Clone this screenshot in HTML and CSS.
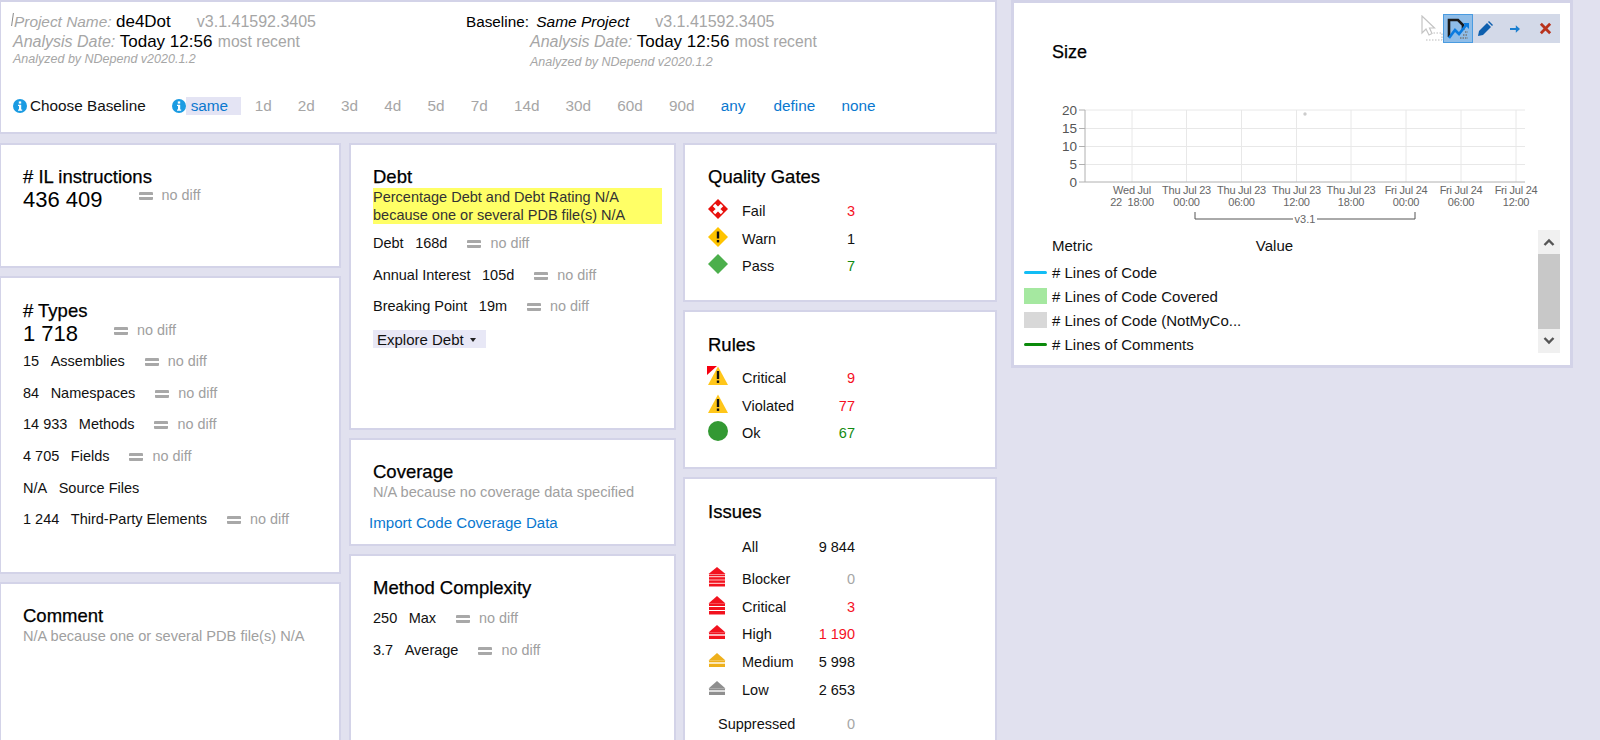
FILE: index.html
```html
<!DOCTYPE html>
<html>
  <head lang="en">
    <meta charset="UTF-8" />
    <title>de4Dot dashboard</title>
    <link rel="stylesheet" href="styles.css">
  </head>

  <body>
    <svg class="icon-defs" width="0" height="0">
      <symbol id="i-fail" viewBox="0 0 20 20">
        <path d="M10 0 20 10 10 20 0 10z" fill="#e8100c"/>
        <path d="M6 6 14 14M14 6 6 14" stroke="#fff" stroke-width="3.4"/>
      </symbol>
      <symbol id="i-warn" viewBox="0 0 20 20">
        <path d="M10 0 20 10 10 20 0 10z" fill="#ffc400"/>
        <path d="M10 4.500V11.500" stroke="#111" stroke-width="2.400"/>
        <rect x="8.800" y="13" width="2.400" height="2.400" fill="#111"/>
      </symbol>
      <symbol id="i-pass" viewBox="0 0 20 20">
        <path d="M10 0 20 10 10 20 0 10z" fill="#4caf4c"/>
      </symbol>
      <symbol id="i-tri" viewBox="0 0 20 20">
        <path d="M10 0.500 20 19H0z" fill="#ffc61a"/>
        <path d="M10 5V13" stroke="#111" stroke-width="2.400"/>
        <rect x="8.800" y="14.500" width="2.400" height="2.400" fill="#111"/>
      </symbol>
      <symbol id="i-info" viewBox="0 0 14 14">
        <circle cx="7" cy="7" r="7" fill="#1a9be2"/>
        <rect x="5.800" y="2.400" width="2.400" height="2.200" fill="#fff"/>
        <path d="M5 5.700H8.200V10.500H9.200V11.700H5V10.500H6V6.900H5z" fill="#fff"/>
      </symbol>
      <symbol id="i-sev1" viewBox="0 0 18 20">
        <path d="M9 0 17.500 7H.5z" fill="currentColor"/>
        <path d="M1 7.500H17V19.500H1z" fill="currentColor"/>
        <path d="M1 9.700H17M1 13H17M1 16.300H17" stroke="#fbb" stroke-width="1.200"/>
      </symbol>
      <symbol id="i-sev2" viewBox="0 0 18 20">
        <path d="M9 1 17.500 8.500H.5z" fill="currentColor"/>
        <path d="M1 8.500H17V19.500H1z" fill="currentColor"/>
        <path d="M1 11.500H17M1 15.500H17" stroke="#fff" stroke-width="1.200"/>
      </symbol>
      <symbol id="i-sev3" viewBox="0 0 18 14">
        <path d="M9 0 17.500 7.500H.5z" fill="currentColor"/>
        <path d="M1 7.500H17V14H1z" fill="currentColor"/>
        <path d="M1 10H17" stroke="#fff" stroke-width="1.400"/>
      </symbol>
    </svg>

    <div class="page">
      <div class="main">
        <div class="panel top">
          <div class="top-info">
            <div class="top-col">
              <div class="line-one"><span class="caret"></span><i class="gray name-label">Project Name:</i> <span class="big name-val">de4Dot</span><span class="gray version">v3.1.41592.3405</span></div>
              <div class="line-two"><i class="gray">Analysis Date:</i> <span class="big">Today 12:56</span> <span class="gray recent">most recent</span></div>
              <div class="line-three"><i>Analyzed by NDepend v2020.1.2</i></div>
            </div>
            <div class="top-col top-col-right">
              <div class="line-one baseline">Baseline: <i class="same-project">Same Project</i><span class="gray version">v3.1.41592.3405</span></div>
              <div class="line-two indent"><i class="gray">Analysis Date:</i> <span class="big">Today 12:56</span> <span class="gray recent">most recent</span></div>
              <div class="line-three indent line-three-right"><i>Analyzed by NDepend v2020.1.2</i></div>
            </div>
          </div>
          <div class="choose">
            <svg class="info"><use href="#i-info"/></svg>
            <span class="choose-label">Choose Baseline</span>
            <svg class="info info-same"><use href="#i-info"/></svg>
            <a class="link same" href="#">same</a>
            <div class="days">
              <span>1d</span><span>2d</span><span>3d</span><span>4d</span><span>5d</span><span>7d</span><span>14d</span><span>30d</span><span>60d</span><span>90d</span>
              <a class="link any" href="#">any</a><a class="link" href="#">define</a><a class="link" href="#">none</a>
            </div>
          </div>
        </div>

        <div class="columns">
          <div class="col col-1">
            <div class="card card-il">
              <h2># IL instructions</h2>
              <div class="big-num">436 409<span class="diff diff-big"><b class="eq"></b>no diff</span></div>
            </div>
            <div class="card card-types">
              <h2># Types</h2>
              <div class="big-num">1 718<span class="diff diff-big"><b class="eq"></b>no diff</span></div>
              <div class="row first"><span class="val">15</span>Assemblies<span class="diff"><b class="eq"></b>no diff</span></div>
              <div class="row"><span class="val">84</span>Namespaces<span class="diff"><b class="eq"></b>no diff</span></div>
              <div class="row"><span class="val">14 933</span>Methods<span class="diff"><b class="eq"></b>no diff</span></div>
              <div class="row"><span class="val">4 705</span>Fields<span class="diff"><b class="eq"></b>no diff</span></div>
              <div class="row"><span class="val">N/A</span>Source Files</div>
              <div class="row"><span class="val">1 244</span>Third-Party Elements<span class="diff"><b class="eq"></b>no diff</span></div>
            </div>
            <div class="card card-comment">
              <h2>Comment</h2>
              <div class="muted">N/A because one or several PDB file(s) N/A</div>
            </div>
          </div>

          <div class="col col-2">
            <div class="card card-debt">
              <h2>Debt</h2>
              <div class="warn-box">Percentage Debt and Debt Rating N/A<br>because one or several PDB file(s) N/A</div>
              <div class="row row-plain"><span class="val">Debt</span>168d<span class="diff"><b class="eq"></b>no diff</span></div>
              <div class="row"><span class="val">Annual Interest</span>105d<span class="diff"><b class="eq"></b>no diff</span></div>
              <div class="row"><span class="val">Breaking Point</span>19m<span class="diff"><b class="eq"></b>no diff</span></div>
              <div class="explore">Explore Debt<span class="arrow"></span></div>
            </div>
            <div class="card card-coverage">
              <h2>Coverage</h2>
              <div class="muted">N/A because no coverage data specified</div>
              <a class="link import" href="#">Import Code Coverage Data</a>
            </div>
            <div class="card card-complexity">
              <h2>Method Complexity</h2>
              <div class="row first"><span class="val">250</span>Max<span class="diff"><b class="eq"></b>no diff</span></div>
              <div class="row"><span class="val">3.7</span>Average<span class="diff"><b class="eq"></b>no diff</span></div>
            </div>
          </div>

          <div class="col col-3">
            <div class="card card-gates">
              <h2>Quality Gates</h2>
              <div class="stat first"><svg class="stat-icon"><use href="#i-fail"/></svg><span class="stat-name">Fail</span><span class="stat-val red">3</span></div>
              <div class="stat"><svg class="stat-icon"><use href="#i-warn"/></svg><span class="stat-name">Warn</span><span class="stat-val">1</span></div>
              <div class="stat"><svg class="stat-icon"><use href="#i-pass"/></svg><span class="stat-name">Pass</span><span class="stat-val green">7</span></div>
            </div>
            <div class="card card-rules">
              <h2>Rules</h2>
              <div class="stat first"><span class="corner"></span><svg class="stat-icon"><use href="#i-tri"/></svg><span class="stat-name">Critical</span><span class="stat-val red">9</span></div>
              <div class="stat"><svg class="stat-icon"><use href="#i-tri"/></svg><span class="stat-name">Violated</span><span class="stat-val red">77</span></div>
              <div class="stat"><span class="ok-dot"></span><span class="stat-name">Ok</span><span class="stat-val green">67</span></div>
            </div>
            <div class="card card-issues">
              <h2>Issues</h2>
              <div class="stat first"><span class="stat-blank"></span><span class="stat-name">All</span><span class="stat-val">9 844</span></div>
              <div class="stat sev-first"><svg class="sev sev-red"><use href="#i-sev1"/></svg><span class="stat-name">Blocker</span><span class="stat-val gray">0</span></div>
              <div class="stat"><svg class="sev sev-red"><use href="#i-sev2"/></svg><span class="stat-name">Critical</span><span class="stat-val red">3</span></div>
              <div class="stat"><svg class="sev sev-small sev-red"><use href="#i-sev3"/></svg><span class="stat-name">High</span><span class="stat-val red">1 190</span></div>
              <div class="stat"><svg class="sev sev-small sev-amber"><use href="#i-sev3"/></svg><span class="stat-name">Medium</span><span class="stat-val">5 998</span></div>
              <div class="stat"><svg class="sev sev-small sev-gray"><use href="#i-sev3"/></svg><span class="stat-name">Low</span><span class="stat-val">2 653</span></div>
              <div class="stat suppressed"><span class="stat-name">Suppressed</span><span class="stat-val gray">0</span></div>
            </div>
          </div>
        </div>
      </div>

      <div class="panel side">
        <div class="toolbar">
          <svg class="drag-cursor" width="22" height="26" viewBox="0 0 22 26">
            <path d="M1 1V18L5 14 8 20 11 18.500 8.500 13H13.500z" fill="#fff" stroke="#c4c4c4" stroke-width="1.200"/>
            <path d="M5 25H21V18H12" fill="none" stroke="#bbb" stroke-dasharray="1.500 1.500"/>
          </svg>
          <span class="tool tool-on">
            <svg width="24" height="24" viewBox="0 0 24 24">
              <path d="M3 20V3H12L17 8V13" fill="none" stroke="#1a1a1a" stroke-width="2.600"/>
              <path d="M14 21H22M17 18H22M19 15H22" stroke="#777" stroke-dasharray="1.500 1" stroke-width="1.500"/>
              <path d="M3 21 9 13 13 17 21 7" fill="none" stroke="#0a7be0" stroke-width="2.600"/>
              <path d="M17 6H23V12z" fill="#0a7be0"/>
            </svg>
          </span>
          <span class="tool tool-pencil">
            <svg width="16" height="16" viewBox="0 0 16 16">
              <path d="M1 15 2 10 10 2 14 6 6 14z" fill="#0e5fae"/>
              <path d="M11 1 12 0 16 4 15 5z" fill="#0e5fae"/>
            </svg>
          </span>
          <span class="tool">
            <svg width="12" height="10" viewBox="0 0 14 12">
              <path d="M1 6H11" stroke="#1b7fd0" stroke-width="2.400"/>
              <path d="M8 1.500 13 6 8 10.500z" fill="#1b7fd0"/>
            </svg>
          </span>
          <span class="tool">
            <svg width="13" height="13" viewBox="0 0 14 14">
              <path d="M2 2 12 12M12 2 2 12" stroke="#b8321c" stroke-width="3"/>
            </svg>
          </span>
        </div>

        <h2 class="size-title">Size</h2>

        <svg class="chart" width="560" height="130" viewBox="0 0 560 130">
          <g class="grid">
            <path d="M72 10H512M72 28.500H512M72 46.500H512M72 64.500H512"/>
            <path d="M119 10V82M173.500 10V82M228.500 10V82M283.500 10V82M338 10V82M393 10V82M448 10V82M503 10V82"/>
          </g>
          <path class="axis" d="M72 10V82H512M66 10H72M66 28.500H72M66 46.500H72M66 64.500H72M66 82H72"/>
          <circle cx="292" cy="14" r="1.700" fill="#ccc"/>
          <g class="y-labels">
            <text x="64" y="15">20</text>
            <text x="64" y="33">15</text>
            <text x="64" y="51">10</text>
            <text x="64" y="69">5</text>
            <text x="64" y="87">0</text>
          </g>
          <g class="x-labels">
            <text x="119" y="94">Wed Jul</text><text x="119" y="106">22  18:00</text>
            <text x="173.500" y="94">Thu Jul 23</text><text x="173.500" y="106">00:00</text>
            <text x="228.500" y="94">Thu Jul 23</text><text x="228.500" y="106">06:00</text>
            <text x="283.500" y="94">Thu Jul 23</text><text x="283.500" y="106">12:00</text>
            <text x="338" y="94">Thu Jul 23</text><text x="338" y="106">18:00</text>
            <text x="393" y="94">Fri Jul 24</text><text x="393" y="106">00:00</text>
            <text x="448" y="94">Fri Jul 24</text><text x="448" y="106">06:00</text>
            <text x="503" y="94">Fri Jul 24</text><text x="503" y="106">12:00</text>
          </g>
          <path class="bracket" d="M182 112V119H280M304 119H402V112"/>
          <text class="bracket-label" x="292" y="123">v3.1</text>
        </svg>

        <div class="legend">
          <div class="legend-table">
            <div class="legend-head"><span>Metric</span><span class="legend-value">Value</span></div>
            <div class="legend-row"><span class="swatch swatch-line swatch-blue"></span># Lines of Code</div>
            <div class="legend-row"><span class="swatch swatch-green"></span># Lines of Code Covered</div>
            <div class="legend-row"><span class="swatch swatch-gray"></span># Lines of Code (NotMyCo...</div>
            <div class="legend-row"><span class="swatch swatch-line swatch-dark"></span># Lines of Comments</div>
          </div>
          <div class="scrollbar">
            <span class="scroll-btn"><svg width="12" height="8" viewBox="0 0 12 8"><path d="M1.500 7 6 2.500 10.500 7" fill="none" stroke="#555" stroke-width="2.400"/></svg></span>
            <span class="scroll-thumb"></span>
            <span class="scroll-btn"><svg width="12" height="8" viewBox="0 0 12 8"><path d="M1.500 1 6 5.500 10.500 1" fill="none" stroke="#555" stroke-width="2.400"/></svg></span>
          </div>
        </div>
      </div>
    </div>
  </body>
</html>
```

FILE: styles.css
```css
* {
  box-sizing: border-box;
}

html,
body {
  margin: 0;
  padding: 0;
  height: 740px;
  overflow: hidden;
  background: #e1e1ef;
  font-family: "Liberation Sans", Arial, sans-serif;
  font-size: 14.5px;
  color: #111;
}

.icon-defs {
  position: absolute;
}

h2 {
  margin: 0;
  font-size: 18.5px;
  line-height: 22px;
  font-weight: normal;
  color: #000;
  -webkit-text-stroke: 0.25px #000;
}

a {
  text-decoration: none;
}

.page {
  display: flex;
  align-items: flex-start;
  height: 740px;
  overflow: hidden;
}

.main {
  width: 997px;
  height: 740px;
  flex: none;
  overflow: hidden;
}

.panel,
.card {
  background: #ffffff;
  border: 2px solid #d3d3e8;
}

/* header */
.top {
  height: 134px;
  border-left-width: 1px;
  padding: 10px 0 0 11px;
  color: #000;
}

.top-info {
  display: flex;
  height: 84px;
}

.top-col {
  width: 454px;
}

.gray {
  color: #a6a6a6;
}

.big {
  font-size: 17px;
  color: #000;
}

.line-one {
  height: 20px;
  line-height: 20px;
  font-size: 16px;
  white-space: nowrap;
}

.line-two {
  height: 19px;
  line-height: 19px;
  font-size: 16px;
  white-space: nowrap;
  margin-left: 1px;
}

.recent {
  font-size: 15.7px;
  margin-left: 1px;
}

.line-three {
  height: 18px;
  line-height: 16px;
  font-size: 12.5px;
  color: #a6a6a6;
  margin-left: 1px;
}

.line-three-right {
  padding-top: 3px;
}

.caret {
  display: inline-block;
  width: 1px;
  height: 13px;
  margin-right: 1px;
  background: #888;
  transform: skewX(-8deg);
  vertical-align: 1px;
}

.name-label {
  font-size: 15.4px;
}

.name-val {
  margin-right: 26px;
}

.baseline {
  font-size: 15.3px;
}

.same-project {
  margin-right: 26px;
  margin-left: 3px;
  font-size: 15.5px;
}

.version {
  font-size: 16px;
}

.indent {
  margin-left: 64px;
}

.choose {
  display: flex;
  align-items: center;
  height: 18px;
  margin-top: 1px;
  font-size: 15.3px;
  line-height: 18px;
}

.info {
  width: 14px;
  height: 14px;
  flex: none;
  margin-left: 1px;
}

.choose-label {
  margin-left: 3px;
  color: #111;
}

.info-same {
  margin-left: 26px;
}

.link {
  color: #0a78cf;
}

.same {
  width: 55px;
  padding-left: 5px;
  background: #e4e4f4;
}

.days {
  display: flex;
  gap: 26.200px;
  margin-left: 14px;
  color: #a6a6a6;
}

.any {
  margin-right: 2px;
}

/* dashboard columns */
.columns {
  display: flex;
  margin-top: 9px;
}

.col {
  display: flex;
  flex-direction: column;
  gap: 8px;
  flex: none;
}

.col-1 {
  width: 341px;
  margin-right: 8px;
}

.col-2 {
  width: 327px;
  margin-right: 7px;
}

.col-3 {
  width: 314px;
}

.card {
  padding: 21px 10px 0 22px;
}

.col-1 .card {
  border-left-width: 1px;
}

.col-3 .card {
  padding-left: 23px;
}

.card-il {
  height: 125px;
}

.card-types {
  height: 298px;
}

.card-types h2,
.card-rules h2,
.card-issues h2 {
  margin-top: 1px;
}

.card-comment {
  height: 200px;
}

.card-debt {
  height: 287px;
}

.card-coverage {
  height: 108px;
}

.card-complexity {
  height: 200px;
}

.card-gates {
  height: 159px;
}

.card-rules {
  height: 159px;
}

.card-issues {
  height: 280px;
}

.big-num {
  display: flex;
  align-items: center;
  height: 24px;
  font-size: 22px;
  line-height: 24px;
  color: #000;
}

.diff {
  display: inline-flex;
  align-items: center;
  margin-left: 20px;
  font-size: 14.4px;
  color: #a0a0a0;
}

.diff-big {
  margin-left: 36px;
  position: relative;
  top: -5px;
}

.card-types .diff-big {
  top: -4px;
}

.eq {
  display: inline-block;
  width: 14px;
  height: 8px;
  margin-right: 9px;
  border-top: 3px solid #a8a8a8;
  border-bottom: 3px solid #a8a8a8;
  border-radius: 1px;
  position: relative;
  top: 1px;
}

.row {
  display: flex;
  align-items: center;
  height: 18px;
  margin-top: 13.700px;
  line-height: 18px;
  white-space: nowrap;
}

.row.first {
  margin-top: 6px;
}

.card-complexity .row.first {
  margin-top: 10px;
}

.row-plain {
  margin-top: 10px;
}

.val {
  margin-right: 11.500px;
}

.muted {
  line-height: 18px;
  font-size: 14.600px;
  color: #a0a0a0;
}

.warn-box {
  width: 289px;
  height: 36px;
  margin-top: 0;
  line-height: 17.500px;
  padding-top: 1px;
  background: #ffff66;
  color: #333;
}

.explore {
  display: flex;
  align-items: center;
  width: 113px;
  height: 18px;
  margin-top: 15px;
  padding-left: 4px;
  font-size: 15px;
  background: #e8e8f6;
}

.arrow {
  width: 0;
  height: 0;
  margin-left: 6px;
  margin-top: 1px;
  border: 3px solid transparent;
  border-top: 4px solid #222;
  border-bottom: 0;
}

.import {
  display: block;
  margin: 13px 0 0 -4px;
  font-size: 15.100px;
  line-height: 18px;
}

/* stat rows with icons */
.stat {
  display: flex;
  align-items: center;
  position: relative;
  width: 147px;
  height: 18px;
  margin-top: 9.700px;
}

.stat.first {
  margin-top: 14px;
}

.card-rules .stat.first {
  margin-top: 13px;
}

.card-issues .stat.first {
  margin-top: 15px;
}

.stat-icon {
  width: 20px;
  height: 20px;
  flex: none;
  margin-top: -4px;
}

.stat-blank {
  width: 20px;
  flex: none;
}

.stat-name {
  margin-left: 14px;
  flex: 1;
}

.stat-val {
  text-align: right;
}

.red {
  color: #f5111f;
}

.green {
  color: #128a12;
}

.corner {
  position: absolute;
  left: -1px;
  top: -3px;
  width: 0;
  height: 0;
  border-top: 9px solid #f5000f;
  border-right: 10px solid transparent;
  z-index: 1;
}

.ok-dot {
  width: 20px;
  height: 20px;
  flex: none;
  margin-top: -4px;
  border-radius: 50%;
  background: #339933;
}

.sev {
  width: 18px;
  height: 20px;
  flex: none;
  margin-top: -4px;
  margin-right: 2px;
}

.sev-small {
  height: 14px;
}

.sev-red {
  color: #f2121e;
}

.sev-amber {
  color: #eeb01c;
}

.sev-gray {
  color: #8f8f8f;
}

.sev-first {
  margin-top: 14px;
}

.suppressed {
  margin-top: 16px;
}

.suppressed .stat-name {
  margin-left: 10px;
}

/* right panel */
.side {
  position: relative;
  width: 562px;
  height: 368px;
  margin-left: 14px;
  padding: 38px 0 0 0;
  border-width: 3px;
}

.size-title {
  margin-left: 38px;
  font-size: 18px;
}

.toolbar {
  position: absolute;
  top: 11px;
  right: 10px;
  display: flex;
  align-items: center;
  width: 117px;
  height: 29px;
  background: #d3d9e8;
}

.drag-cursor {
  position: absolute;
  left: -22px;
  top: 1px;
}

.tool {
  display: flex;
  align-items: center;
  justify-content: center;
  width: 30px;
  height: 29px;
}

.tool-on {
  background: #8fbde8;
  border: 1px solid #4a9be0;
}

.tool-pencil {
  margin-left: -3px;
}

.chart {
  display: block;
  margin: 37px 0 0 -1px;
}

.grid path {
  fill: none;
  stroke: #e8e8e8;
}

.axis {
  fill: none;
  stroke: #b0b0b0;
}

.y-labels text {
  font-size: 13.500px;
  fill: #555;
  text-anchor: end;
}

.x-labels text {
  font-size: 11px;
  letter-spacing: -0.25px;
  fill: #666;
  text-anchor: middle;
  white-space: pre;
}

.bracket {
  fill: none;
  stroke: #555;
}

.bracket-label {
  font-size: 11px;
  fill: #666;
  text-anchor: middle;
}

.legend {
  position: relative;
  font-size: 15px;
}

.legend-table {
  padding: 0 0 0 10px;
  margin-top: 4px;
}

.legend-head {
  display: flex;
  height: 24px;
  line-height: 24px;
  margin-left: 28px;
}

.legend-value {
  margin-left: 163px;
}

.legend-row {
  display: flex;
  align-items: center;
  height: 24px;
}

.legend-head + .legend-row {
  margin-top: 2px;
}

.swatch {
  display: block;
  width: 23px;
  height: 16px;
  margin-right: 5px;
}

.swatch-line {
  height: 3px;
  border-radius: 2px;
}

.swatch-blue {
  background: #12bdf5;
}

.swatch-dark {
  background: #0b8a0b;
}

.swatch-green {
  background: #a5e8a0;
}

.swatch-gray {
  background: #d8d8d8;
}

.scrollbar {
  position: absolute;
  right: 10px;
  top: -4px;
  display: flex;
  flex-direction: column;
  width: 22px;
  height: 123px;
  background: #f0f0f0;
}

.scroll-btn {
  display: flex;
  align-items: center;
  justify-content: center;
  height: 24px;
}

.scroll-thumb {
  flex: 1;
  background: #c8c8c8;
}
```
